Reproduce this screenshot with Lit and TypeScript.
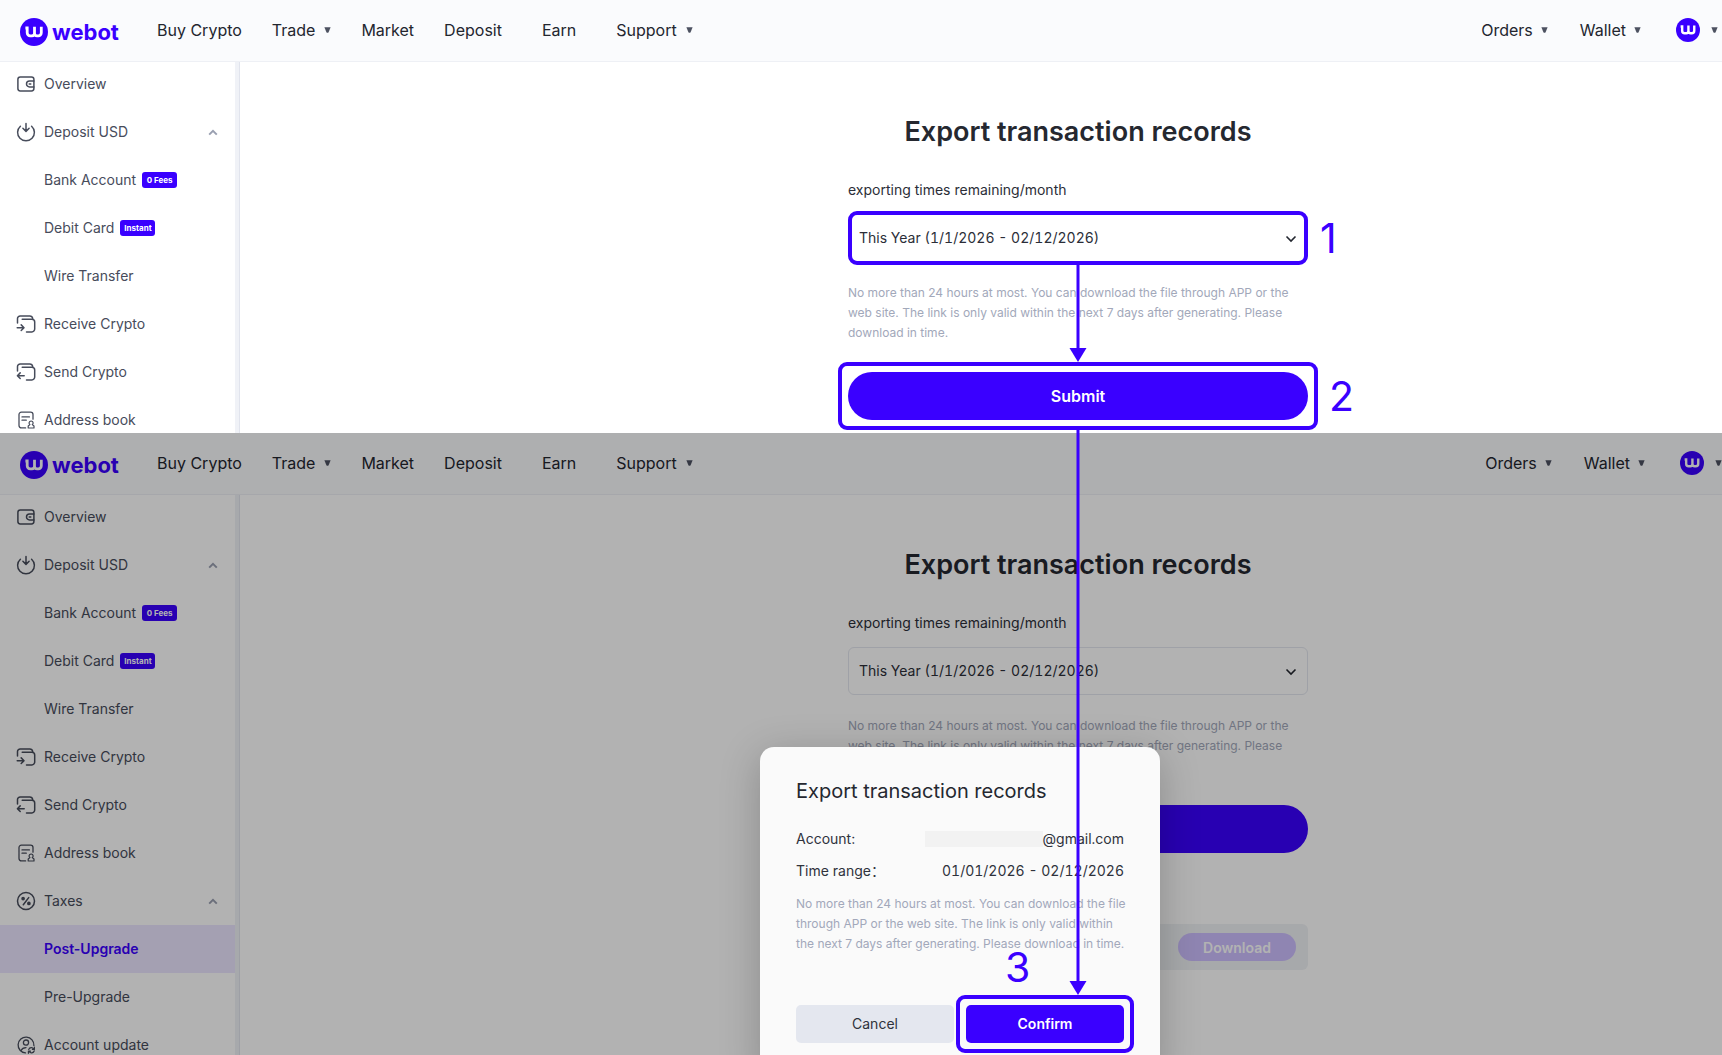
import { LitElement, html, css, svg, nothing } from "lit";
import { customElement, property } from "lit/decorators.js";
import { classMap } from "lit/directives/class-map.js";

const HINT =
  "No more than 24 hours at most. You can download the file through APP or the web site. The link is only valid within the next 7 days after generating. Please download in time.";

const ICONS = {
  wallet: svg`<rect x="1.9" y="2.9" width="16" height="14" rx="2.4"/><path d="M17.9 6.9h-4.4a3 3 0 0 0 0 6h4.4M13.2 9.9h1.6"/>`,
  deposit: svg`<path d="M4.4 4.2a8.4 8.4 0 1 0 11.2 0M10 1.4v7.8M6.9 6.3 10 9.4l3.1-3.1"/>`,
  receive: svg`<path d="M1.5 8.9V4.6A2.7 2.7 0 0 1 4.2 1.9h9.6a3 3 0 0 1 2.9 2.4M6.2 5.3h9.7a2.8 2.8 0 0 1 2.8 2.8v7a2.8 2.8 0 0 1-2.8 2.8h-5.4M1.2 13.7h6.3M5.2 10.9 8 13.7l-2.8 2.8"/>`,
  send: svg`<path d="M1.5 8.9V4.6A2.7 2.7 0 0 1 4.2 1.9h9.6a3 3 0 0 1 2.9 2.4M6.2 5.3h9.7a2.8 2.8 0 0 1 2.8 2.8v7a2.8 2.8 0 0 1-2.8 2.8h-5.4M8.2 13.7H1.8M4.2 10.9l-2.8 2.8 2.8 2.8"/>`,
  book: svg`<path d="M9.6 17.9H5.4a2.4 2.4 0 0 1-2.4-2.4V4.6a2.4 2.4 0 0 1 2.4-2.4h9.2A2.4 2.4 0 0 1 17 4.6v4.6M6 6.9h7.4M6 10.2h4.3" stroke-width="1.3"/><path d="M13.9 14.6a2 2 0 1 1 2.4 0l1.7 1.4v2h-5.8v-2z" stroke-width="1.2"/>`,
  tax: svg`<circle cx="10" cy="10" r="8.5"/><path d="M12.7 6.6 7.3 13.8"/><circle cx="7.1" cy="7.6" r="1.1" fill="currentColor"/><circle cx="12.9" cy="12.4" r="1.1" fill="currentColor"/>`,
  account: svg`<path d="M9.5 17.9A7.9 7.9 0 1 1 17.9 10.6" stroke-width="1.3"/><circle cx="10" cy="7.6" r="2.6" stroke-width="1.3"/><path d="M5 15.6c.9-2 2.7-3 5-3" stroke-width="1.3"/><path d="M12.7 14.4a2.9 2.9 0 0 1 5.1-.4M18.3 15.8a2.9 2.9 0 0 1-5.2.7M18.4 12.2v2.2h-2M12.4 18.3v-2.1h2.1" stroke-width="1.2"/>`,
};

interface Entry {
  label: string;
  icon?: keyof typeof ICONS;
  badge?: string;
  open?: boolean;
  active?: boolean;
}

const MENU: Entry[] = [
  { label: "Overview", icon: "wallet" },
  { label: "Deposit USD", icon: "deposit", open: true },
  { label: "Bank Account", badge: "0 Fees" },
  { label: "Debit Card", badge: "Instant" },
  { label: "Wire Transfer" },
  { label: "Receive Crypto", icon: "receive" },
  { label: "Send Crypto", icon: "send" },
  { label: "Address book", icon: "book" },
  { label: "Taxes", icon: "tax", open: true },
  { label: "Post-Upgrade", active: true },
  { label: "Pre-Upgrade" },
  { label: "Account update", icon: "account" },
];

const caret = html`<svg class="caret" viewBox="0 0 7 6" width="7" height="6" aria-hidden="true"><path d="M.4.3h6.2L4.6 5.2q-1.1 1.2-2.2 0z" fill="#4c5160"/></svg>`;

const mark = (size: number) => html`<svg class="mark" viewBox="0 0 28 28" width=${size} height=${size} aria-hidden="true">
  <circle cx="14" cy="14" r="14" fill="#3a00ff"/>
  <path d="M5.4 10h1.8v4.8a3 3 0 0 0 3 3h1.8a2.5 2.5 0 0 0 2.5-2.5V8.8v6.4a2.6 2.6 0 0 0 2.6 2.6h1.2a3 3 0 0 0 3-3v-6" fill="none" stroke="#fff" stroke-width="2.8"/>
</svg>`;

const shared = css`
  * { box-sizing: border-box; }
  a { color: inherit; text-decoration: none; }
  button, select { font: inherit; color: inherit; border: 0; background: none; padding: 0; margin: 0; }
  svg { display: block; flex: none; }
  h1, h2, p, ul, dl, dd { margin: 0; padding: 0; }
  ul { list-style: none; }
`;

@customElement("top-bar")
export class TopBar extends LitElement {
  static styles = [shared, css`
    :host { display: block; position: relative; z-index: 1; }
    .bar { display: flex; align-items: center; height: 62px; padding: 0 4px 2px 20px; background: #fafbfd; border-bottom: 1px solid #eef0f5; color: #23262f; font-size: 16px; line-height: 24px; white-space: nowrap; overflow: hidden; }
    .bar.flush { padding-right: 0; }
    .brand { display: flex; align-items: center; gap: 4px; width: 137px; padding-top: 4px; color: #3a00ff; font-size: 22px; font-weight: 700; }
    .links { display: flex; gap: 30px; flex: 1; }
    .links.right { flex: none; gap: 32px; align-items: center; }
    .drop { display: flex; align-items: center; gap: 9px; }
    .right .drop { gap: 8px; }
    .spaced { margin: 0 10px; }
    .user { display: flex; align-items: center; gap: 11px; padding-left: 3px; }
  `];
  @property({ type: Boolean }) flush = false;
  render() {
    const drop = (t: string) => html`<button class="drop" type="button">${t}${caret}</button>`;
    return html`<header class=${classMap({ bar: true, flush: this.flush })}>
      <a class="brand" href="#">${mark(28)}<span>webot</span></a>
      <nav class="links">
        <a href="#">Buy Crypto</a>${drop("Trade")}<a href="#">Market</a><a href="#">Deposit</a>
        <a class="spaced" href="#">Earn</a>${drop("Support")}
      </nav>
      <div class="links right">
        ${drop("Orders")}${drop("Wallet")}
        <button class="user" type="button" aria-label="Profile">${mark(24)}${caret}</button>
      </div>
    </header>`;
  }
}

@customElement("side-menu")
export class SideMenu extends LitElement {
  static styles = [shared, css`
    :host { display: block; width: 240px; background: #fff; border-right: 1px solid #e1e4ed; }
    nav { height: 100%; margin-right: 4px; box-shadow: 4px 0 #f0f2f7; }
    ul { margin-top: -2px; }
    a { display: flex; align-items: center; gap: 8px; height: 48px; padding: 0 17px 0 16px; color: #474c5b; font-size: 14px; line-height: 20px; }
    .sub { padding-left: 44px; gap: 6px; }
    .active { background: #ebe5ff; color: #3a00ff; font-weight: 600; }
    .badge { display: flex; align-items: center; justify-content: center; min-width: 35px; height: 16px; border-radius: 3px; background: #3a00ff; color: #fff; font-size: 8px; font-weight: 700; line-height: 16px; }
    .fold { margin-left: auto; }
  `];
  @property({ type: Number }) rows = MENU.length;
  render() {
    return html`<nav><ul>${MENU.slice(0, this.rows).map(e => html`<li>
      <a href="#" class=${classMap({ sub: !e.icon, active: !!e.active })}>
        ${e.icon ? html`<svg width="20" height="20" viewBox="0 0 20 20" fill="none" stroke="currentColor" stroke-width="1.5" stroke-linecap="round" stroke-linejoin="round" aria-hidden="true">${ICONS[e.icon]}</svg>` : nothing}
        <span>${e.label}</span>
        ${e.badge ? html`<span class="badge">${e.badge}</span>` : nothing}
        ${e.open ? html`<svg class="fold" width="10" height="8" viewBox="0 0 10 8" fill="none" stroke="#9aa0b1" stroke-width="2" aria-hidden="true"><path d="M1.2 6.6 5 2.8l3.8 3.8"/></svg>` : nothing}
      </a></li>`)}</ul></nav>`;
  }
}

@customElement("export-page")
export class ExportPage extends LitElement {
  static styles = [shared, css`
    :host { display: flex; flex-direction: column; position: relative; overflow: hidden; background: #fff; }
    .body { display: grid; grid-template-columns: 240px 1fr; flex: 1; min-height: 0; }
    .main { padding: 52px 0 0 194px; }
    .form { position: relative; width: 460px; margin: 0 auto; color: #2b2e38; }
    h1 { font-size: 27px; font-weight: 600; line-height: 36px; text-align: center; color: #252830; }
    .label { display: block; margin-top: 30px; font-size: 14px; line-height: 20px; }
    .field { position: relative; margin-top: 14px; }
    select { display: block; width: 100%; height: 48px; padding: 0 10px 2px; border: 1px solid #e4e7ef; border-radius: 6px; appearance: none; font-size: 14px; font-variant-numeric: tabular-nums; }
    .chevron { position: absolute; right: 11px; top: 20px; pointer-events: none; }
    .hint { margin-top: 21px; font-size: 12px; line-height: 20px; color: #a2a8ba; }
    .submit { position: relative; margin-top: 29px; }
    .submit button { display: block; width: 100%; height: 48px; border-radius: 24px; background: #3a00ff; color: #fff; font-size: 16px; font-weight: 600; }
    .file { display: flex; justify-content: flex-end; margin-top: 71px; padding: 9px 12px; border-radius: 6px; background: #f0f2f5; }
    .file button { width: 118px; height: 28px; border-radius: 14px; background: #cdbfff; color: #fff; font-size: 14px; font-weight: 600; }
    .frame { position: absolute; border: 4px solid #3a00ff; border-radius: 9px; pointer-events: none; }
    .frame.tight { inset: -3px 0; }
    .frame.loose { inset: -10px; }
    .step { position: absolute; color: #3a00ff; font-size: 41px; line-height: 48px; font-weight: 400; }
    .step.one { left: 472px; top: 0; }
    .step.two { left: 481px; top: 0; }
    .step.three { left: 39px; bottom: 52px; }
    .arrow { position: absolute; left: 50%; top: 150px; margin-left: -9px; }
    .shade { position: absolute; inset: 0; z-index: 2; background: rgba(0, 0, 0, 0.3); }
    .dialog { position: absolute; left: calc(50% - 101px); top: 314px; z-index: 3; width: 400px; padding: 30px 36px 36px; border-radius: 14px; background: #fafafa; box-shadow: 0 8px 40px rgba(0, 0, 0, 0.22); color: #2f323c; font-size: 14px; line-height: 20px; }
    h2 { font-size: 20px; font-weight: 400; line-height: 28px; color: #252830; }
    dl { display: grid; gap: 12px; margin-top: 24px; }
    dl div { display: flex; justify-content: space-between; }
    dd { display: flex; align-items: center; font-variant-numeric: tabular-nums; }
    .masked { width: 118px; height: 16px; background: #f2f2f2; }
    .dialog .hint { margin: 13px -4px 0 0; }
    .actions { display: grid; grid-template-columns: 1fr 1fr; gap: 12px; margin-top: 51px; }
    .actions button { width: 100%; height: 38px; border-radius: 5px; background: #e4e7ef; }
    .confirm { position: relative; }
    .actions .confirm button { background: #3a00ff; color: #fff; font-weight: 600; }
  `];
  @property({ type: Boolean }) confirming = false;

  private dialog() {
    return html`<div class="shade"></div>
      <section class="dialog" role="dialog" aria-labelledby="dialog-title">
        <h2 id="dialog-title">Export transaction records</h2>
        <dl>
          <div><dt>Account:</dt><dd><span class="masked"></span>@gmail.com</dd></div>
          <div><dt>Time range：</dt><dd>01/01/2026 - 02/12/2026</dd></div>
        </dl>
        <p class="hint">${HINT}</p>
        <div class="actions">
          <button type="button">Cancel</button>
          <div class="confirm">
            <button type="button">Confirm</button>
            <span class="frame loose"></span><span class="step three">3</span>
          </div>
        </div>
      </section>`;
  }

  render() {
    const guide = !this.confirming;
    return html`<top-bar ?flush=${this.confirming}></top-bar>
      <div class="body">
        <side-menu rows=${guide ? 8 : MENU.length}></side-menu>
        <main class="main">
          <form class="form">
            <h1>Export transaction records</h1>
            <label class="label" for="range">exporting times remaining/month</label>
            <div class="field">
              <select id="range"><option>This Year (1/1/2026 - 02/12/2026)</option></select>
              <svg class="chevron" width="12" height="10" viewBox="0 0 12 10" fill="none" stroke="#23262f" stroke-width="1.6" aria-hidden="true"><path d="M1.5 2.5 6 7l4.5-4.5"/></svg>
              ${guide ? html`<span class="frame tight"></span><span class="step one">1</span>` : nothing}
            </div>
            <p class="hint">${HINT}</p>
            <div class="submit">
              <button type="button">${"Submit"}</button>
              ${guide ? html`<span class="frame loose"></span><span class="step two">2</span>` : nothing}
            </div>
            ${guide
              ? html`<flow-arrow class="arrow" length="98"></flow-arrow>`
              : html`<div class="file"><button type="button">Download</button></div>`}
          </form>
        </main>
      </div>
      ${this.confirming ? this.dialog() : nothing}`;
  }
}

@customElement("flow-arrow")
export class FlowArrow extends LitElement {
  static styles = css`
    :host { display: block; width: 18px; pointer-events: none; }
    svg { display: block; }
  `;
  @property({ type: Number }) length = 100;
  render() {
    const n = this.length;
    return html`<svg width="18" height=${n} viewBox="0 0 18 ${n}" fill="#3a00ff" aria-hidden="true">
      <rect x="7.5" y="0" width="3" height=${n - 8}/><path d="M0.5 ${n - 14}h17L9 ${n}z"/></svg>`;
  }
}

@customElement("app-root")
export class AppRoot extends LitElement {
  static styles = css`
    :host { display: block; font-family: Inter, "Noto Sans", "Noto Sans CJK SC", sans-serif; }
    .steps { position: relative; display: grid; grid-template-rows: 433px 1fr; height: 100vh; overflow: hidden; }
    .arrow { position: absolute; left: calc(50% + 208px); top: 429px; z-index: 4; }
  `;
  render() {
    return html`<div class="steps">
      <export-page></export-page>
      <export-page confirming></export-page>
      <flow-arrow class="arrow" length="566"></flow-arrow>
    </div>`;
  }
}
